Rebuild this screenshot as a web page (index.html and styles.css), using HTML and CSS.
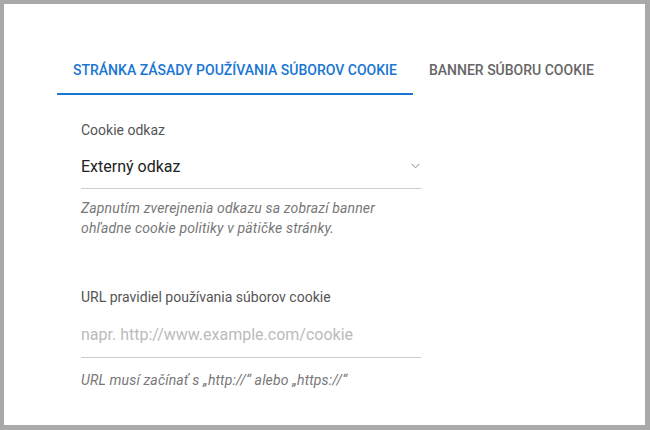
FILE: index.html
```html
<!DOCTYPE html>
<html lang="sk">
<head>
<meta charset="utf-8">
<title>Cookie</title>
<link rel="stylesheet" href="styles.css">
</head>
<body>
<div class="frame">
  <nav class="tabs">
    <div class="tab tab-active">STRÁNKA ZÁSADY POUŽÍVANIA SÚBOROV COOKIE</div>
    <div class="tab">BANNER SÚBORU COOKIE</div>
  </nav>
  <div class="form">
    <div class="field">
      <div class="label">Cookie odkaz</div>
      <div class="select">
        <span class="value">Externý odkaz</span>
        <svg class="chevron" width="9" height="6" viewBox="0 0 9 6"><path d="M0.5 0.8 L4.5 4.8 L8.5 0.8" fill="none" stroke="#888" stroke-width="1"/></svg>
      </div>
      <div class="help">Zapnutím zverejnenia odkazu sa zobrazí banner ohľadne cookie politiky v pätičke stránky.</div>
    </div>
    <div class="field field-url">
      <div class="label">URL pravidiel používania súborov cookie</div>
      <div class="input"><span class="placeholder">napr. http://www.example.com/cookie</span></div>
      <div class="help help-url">URL musí začínať s „http://“ alebo „https://“</div>
    </div>
  </div>
</div>
</body>
</html>
```
FILE: styles.css
```css
html, body {
  margin: 0;
  padding: 0;
}
body {
  background: #a9a9a9;
  font-family: Roboto, "Noto Sans", sans-serif;
}
.frame {
  box-sizing: border-box;
  margin: 4px 5px 5px 4px;
  height: 421px;
  background: #fff;
  padding: 43px 0 0 53px;
}
.tabs {
  display: flex;
}
.tab {
  height: 48px;
  box-sizing: border-box;
  padding: 0 16px;
  display: flex;
  align-items: center;
  font-size: 14px;
  font-weight: 500;
  color: #666;
  border-bottom: 2px solid transparent;
}
.tab-active {
  color: #1976d2;
  border-bottom-color: #1976d2;
}
.form {
  width: 340px;
  padding: 25px 0 0 24px;
}
.label {
  font-size: 14px;
  color: #555;
  line-height: 20px;
}
.select, .input {
  box-sizing: border-box;
  display: flex;
  align-items: center;
  justify-content: space-between;
  border-bottom: 1px solid #ccc;
}
.select {
  height: 49px;
  padding-top: 4px;
}
.input {
  height: 51px;
  padding-top: 5px;
}
.value {
  font-size: 16px;
  color: #222;
}
.chevron {
  margin-right: 1px;
}
.placeholder {
  font-size: 16px;
  color: #bbb;
}
.help {
  margin-top: 9px;
  font-size: 14px;
  line-height: 20px;
  letter-spacing: 0.15px;
  font-style: italic;
  color: #777;
}
.help-url {
  margin-top: 12px;
}
.field-url {
  margin-top: 49px;
}
```
